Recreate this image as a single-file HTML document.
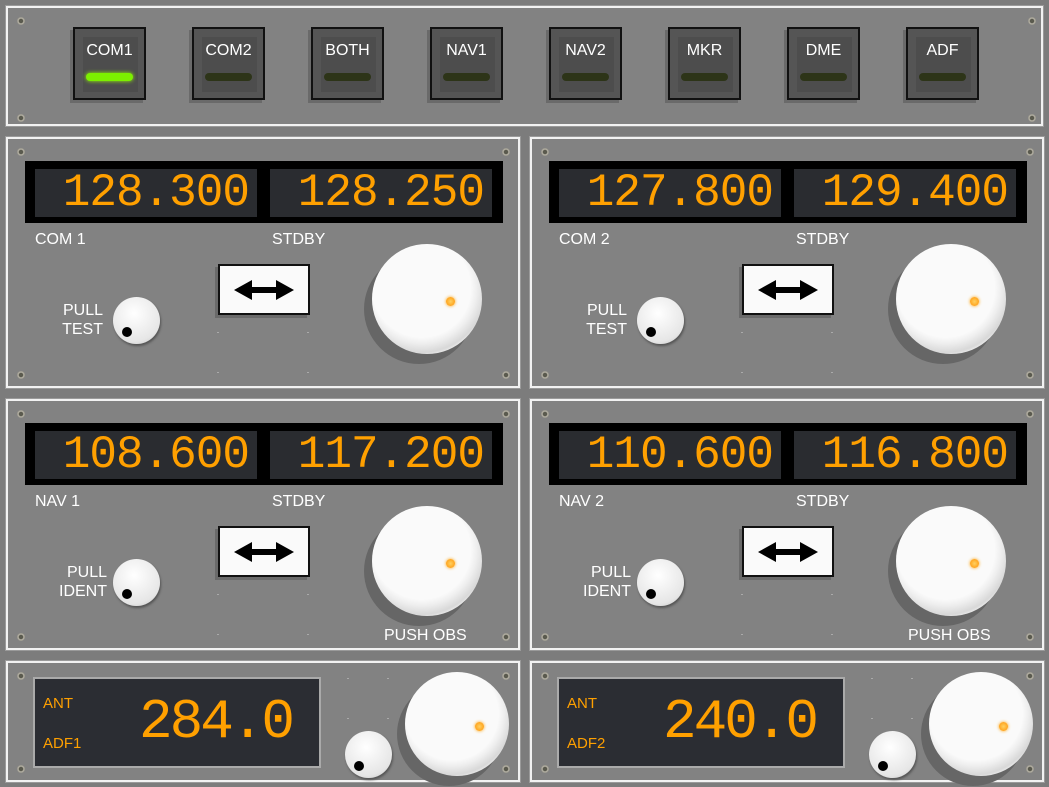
<!DOCTYPE html>
<html><head><meta charset="utf-8"><style>
*{margin:0;padding:0;box-sizing:border-box}
body{width:1049px;height:787px;background:#7c7c7c;position:relative;overflow:hidden;font-family:"Liberation Sans",sans-serif}
.p{position:absolute;background:#828282;border:2px solid #f2f2f2;outline:1px solid #9a9a9a}
.s{position:absolute;width:8px;height:8px;border-radius:50%;background:radial-gradient(circle at 50% 50%,#5a5a4e 0 35%,#b8b4a8 45%,#6e6e66 100%)}
.btn{position:absolute;top:19px;width:73px;height:73px;border:2px solid #111;background:#555;box-shadow:-3px 3px 0 #6a6a6a}
.btn i{position:absolute;left:8px;top:8px;right:6px;bottom:6px;background:#4d4d4d}
.btn b{position:absolute;left:0;right:0;top:13px;text-align:center;color:#fff;font-weight:normal;font-size:16px}
.btn u{position:absolute;left:11px;right:11px;top:44px;height:8px;border-radius:4px;background:#2d3418}
.disp{position:absolute;left:17px;top:22px;width:478px;height:62px;background:#000}
.win{position:absolute;top:8px;width:222px;height:48px;background:#2a2c30;color:#ffa000;font-family:"Liberation Mono",monospace;font-size:46px;line-height:48px;text-align:right;padding-right:8px;letter-spacing:-1px;overflow:hidden}
.lab{position:absolute;color:#fff;font-size:16px}
.swap{position:absolute;left:210px;top:125px;width:92px;height:51px;border:2px solid #111;background:#fafafa;box-shadow:-3px 3px 0 #6a6a6a}
.swap svg{position:absolute;left:12px;top:12px}
.sk{position:absolute;width:47px;height:47px;border-radius:50%;background:radial-gradient(circle at 45% 35%,#fff,#e6e6e6 70%,#bbb);box-shadow:1px 2px 2px #555}
.sk i{position:absolute;left:9px;bottom:7px;width:10px;height:10px;border-radius:50%;background:#000}
.bk{position:absolute;border-radius:50%;background:radial-gradient(circle at 45% 40%,#fafafa 0 55%,#eee 62%,#d8d8d8 72%,#fff 80%,#e8e8e8 100%);box-shadow:-8px 10px 0 #666}
.bk i{position:absolute;width:9px;height:9px;border-radius:50%;background:radial-gradient(circle,#ffd060,#ff9000);box-shadow:0 0 3px #ffa000}
.t{position:absolute;color:#fff;font-size:16px;text-align:right;line-height:19px}
.d{position:absolute;width:2px;height:1px;background:#aaa}
.adf{position:absolute;left:25px;top:14px;width:288px;height:91px;background:#2b2d33;border:2px solid #aaa;overflow:hidden}
.adf .o{position:absolute;color:#ffa000;font-size:15px}
.adf .n{position:absolute;left:104px;top:10px;color:#ffa000;font-family:"Liberation Mono",monospace;font-size:56px;line-height:66px;letter-spacing:-3px}
</style></head><body>

<div class="p" style="left:6px;top:6px;width:1037px;height:120px">
<div class="s" style="left:9px;top:9px"></div><div class="s" style="left:9px;top:106px"></div>
<div class="s" style="left:1020px;top:9px"></div><div class="s" style="left:1020px;top:106px"></div>
<div class="btn" style="left:65px"><i></i><b>COM1</b><u style="background:#7cf000;box-shadow:0 0 4px #9f0"></u></div>
<div class="btn" style="left:184px"><i></i><b>COM2</b><u></u></div>
<div class="btn" style="left:303px"><i></i><b>BOTH</b><u></u></div>
<div class="btn" style="left:422px"><i></i><b>NAV1</b><u></u></div>
<div class="btn" style="left:541px"><i></i><b>NAV2</b><u></u></div>
<div class="btn" style="left:660px"><i></i><b>MKR</b><u></u></div>
<div class="btn" style="left:779px"><i></i><b>DME</b><u></u></div>
<div class="btn" style="left:898px"><i></i><b>ADF</b><u></u></div>
</div>

<div class="p" style="left:6px;top:137px;width:514px;height:251px">
<div class="s" style="left:9px;top:9px"></div><div class="s" style="left:9px;top:232px"></div><div class="s" style="left:494px;top:9px"></div><div class="s" style="left:494px;top:232px"></div>
<div class="disp"><div class="win" style="left:10px">128.300</div><div class="win" style="left:245px">128.250</div></div>
<div class="lab" style="left:27px;top:92px">COM 1</div><div class="lab" style="left:264px;top:92px">STDBY</div>
<div class="swap"><svg width="64" height="24"><path d="M2 12 L20 2 V9 H44 V2 L62 12 L44 22 V15 H20 V22Z" fill="#000"/></svg></div>
<div class="d" style="left:209px;top:193px"></div><div class="d" style="left:299px;top:193px"></div><div class="d" style="left:209px;top:233px"></div><div class="d" style="left:299px;top:233px"></div>
<div class="t" style="left:40px;top:162px;width:55px">PULL<br>TEST</div>
<div class="sk" style="left:105px;top:158px"><i></i></div>
<div class="bk" style="left:364px;top:105px;width:110px;height:110px"><i style="left:74px;top:53px"></i></div>
</div>

<div class="p" style="left:530px;top:137px;width:514px;height:251px">
<div class="s" style="left:9px;top:9px"></div><div class="s" style="left:9px;top:232px"></div><div class="s" style="left:494px;top:9px"></div><div class="s" style="left:494px;top:232px"></div>
<div class="disp"><div class="win" style="left:10px">127.800</div><div class="win" style="left:245px">129.400</div></div>
<div class="lab" style="left:27px;top:92px">COM 2</div><div class="lab" style="left:264px;top:92px">STDBY</div>
<div class="swap"><svg width="64" height="24"><path d="M2 12 L20 2 V9 H44 V2 L62 12 L44 22 V15 H20 V22Z" fill="#000"/></svg></div>
<div class="d" style="left:209px;top:193px"></div><div class="d" style="left:299px;top:193px"></div><div class="d" style="left:209px;top:233px"></div><div class="d" style="left:299px;top:233px"></div>
<div class="t" style="left:40px;top:162px;width:55px">PULL<br>TEST</div>
<div class="sk" style="left:105px;top:158px"><i></i></div>
<div class="bk" style="left:364px;top:105px;width:110px;height:110px"><i style="left:74px;top:53px"></i></div>
</div>

<div class="p" style="left:6px;top:399px;width:514px;height:251px">
<div class="s" style="left:9px;top:9px"></div><div class="s" style="left:9px;top:232px"></div><div class="s" style="left:494px;top:9px"></div><div class="s" style="left:494px;top:232px"></div>
<div class="disp"><div class="win" style="left:10px">108.600</div><div class="win" style="left:245px">117.200</div></div>
<div class="lab" style="left:27px;top:92px">NAV 1</div><div class="lab" style="left:264px;top:92px">STDBY</div>
<div class="swap"><svg width="64" height="24"><path d="M2 12 L20 2 V9 H44 V2 L62 12 L44 22 V15 H20 V22Z" fill="#000"/></svg></div>
<div class="d" style="left:209px;top:193px"></div><div class="d" style="left:299px;top:193px"></div><div class="d" style="left:209px;top:233px"></div><div class="d" style="left:299px;top:233px"></div>
<div class="t" style="left:30px;top:162px;width:69px">PULL<br>IDENT</div>
<div class="sk" style="left:105px;top:158px"><i></i></div>
<div class="bk" style="left:364px;top:105px;width:110px;height:110px"><i style="left:74px;top:53px"></i></div>
<div class="lab" style="left:376px;top:226px">PUSH OBS</div>
</div>

<div class="p" style="left:530px;top:399px;width:514px;height:251px">
<div class="s" style="left:9px;top:9px"></div><div class="s" style="left:9px;top:232px"></div><div class="s" style="left:494px;top:9px"></div><div class="s" style="left:494px;top:232px"></div>
<div class="disp"><div class="win" style="left:10px">110.600</div><div class="win" style="left:245px">116.800</div></div>
<div class="lab" style="left:27px;top:92px">NAV 2</div><div class="lab" style="left:264px;top:92px">STDBY</div>
<div class="swap"><svg width="64" height="24"><path d="M2 12 L20 2 V9 H44 V2 L62 12 L44 22 V15 H20 V22Z" fill="#000"/></svg></div>
<div class="d" style="left:209px;top:193px"></div><div class="d" style="left:299px;top:193px"></div><div class="d" style="left:209px;top:233px"></div><div class="d" style="left:299px;top:233px"></div>
<div class="t" style="left:30px;top:162px;width:69px">PULL<br>IDENT</div>
<div class="sk" style="left:105px;top:158px"><i></i></div>
<div class="bk" style="left:364px;top:105px;width:110px;height:110px"><i style="left:74px;top:53px"></i></div>
<div class="lab" style="left:376px;top:226px">PUSH OBS</div>
</div>

<div class="p" style="left:6px;top:661px;width:514px;height:121px">
<div class="s" style="left:9px;top:9px"></div><div class="s" style="left:9px;top:102px"></div><div class="s" style="left:494px;top:9px"></div><div class="s" style="left:494px;top:102px"></div>
<div class="adf"><div class="o" style="left:8px;top:16px">ANT</div><div class="o" style="left:8px;top:56px">ADF1</div><div class="n">284.0</div></div>
<div class="d" style="left:339px;top:15px"></div><div class="d" style="left:379px;top:15px"></div><div class="d" style="left:339px;top:55px"></div><div class="d" style="left:379px;top:55px"></div>
<div class="sk" style="left:337px;top:68px"><i></i></div>
<div class="bk" style="left:397px;top:9px;width:104px;height:104px"><i style="left:70px;top:50px"></i></div>
</div>

<div class="p" style="left:530px;top:661px;width:514px;height:121px">
<div class="s" style="left:9px;top:9px"></div><div class="s" style="left:9px;top:102px"></div><div class="s" style="left:494px;top:9px"></div><div class="s" style="left:494px;top:102px"></div>
<div class="adf"><div class="o" style="left:8px;top:16px">ANT</div><div class="o" style="left:8px;top:56px">ADF2</div><div class="n">240.0</div></div>
<div class="d" style="left:339px;top:15px"></div><div class="d" style="left:379px;top:15px"></div><div class="d" style="left:339px;top:55px"></div><div class="d" style="left:379px;top:55px"></div>
<div class="sk" style="left:337px;top:68px"><i></i></div>
<div class="bk" style="left:397px;top:9px;width:104px;height:104px"><i style="left:70px;top:50px"></i></div>
</div>

</body></html>
